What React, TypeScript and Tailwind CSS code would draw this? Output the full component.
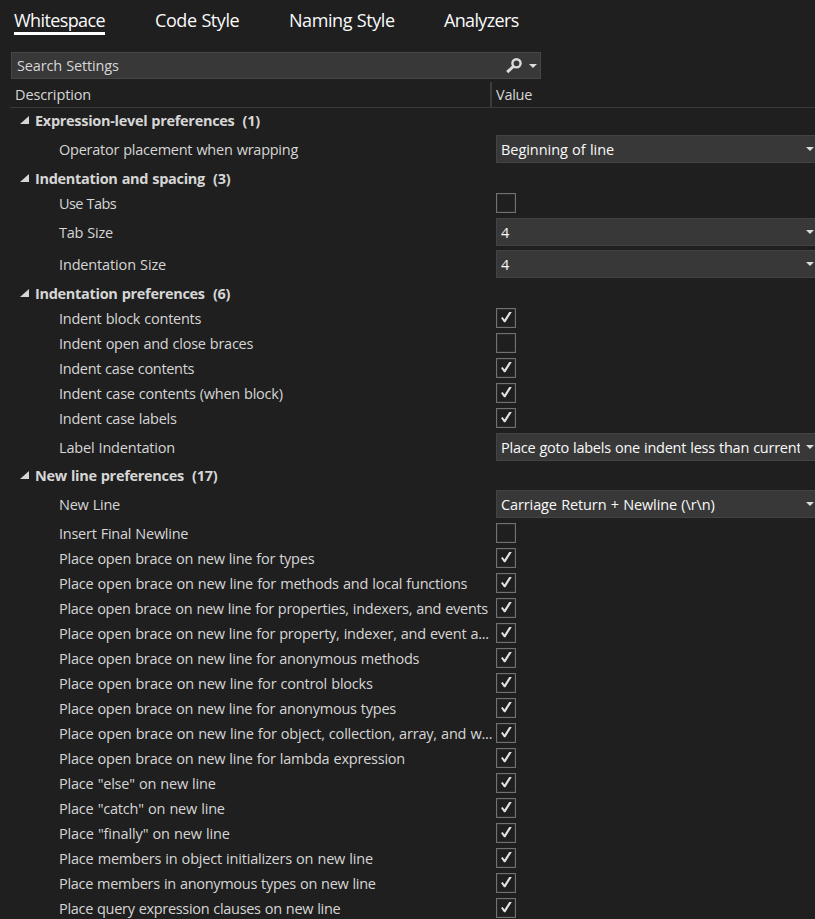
import clsx from "clsx";

type Group = { kind: "group"; label: string; count: number; height: string };
type Check = { kind: "check"; label: string; checked: boolean; tracking?: string };
type Select = {
  kind: "select";
  label: string;
  value: string;
  height: string;
  tracking?: string;
  valueTracking?: string;
};
type Row = Group | Check | Select;

const check = (label: string, checked = true, tracking?: string): Check => ({
  kind: "check",
  label,
  checked,
  tracking,
});

const rows: Row[] = [
  { kind: "group", label: "Expression-level preferences", count: 1, height: "h-[25px] pt-[3px]" },
  {
    kind: "select",
    label: "Operator placement when wrapping",
    value: "Beginning of line",
    height: "h-8",
    valueTracking: "tracking-[-0.05px]",
  },
  { kind: "group", label: "Indentation and spacing", count: 3, height: "h-[26px] pt-1" },
  check("Use Tabs", false, "tracking-[-0.6px]"),
  { kind: "select", label: "Tab Size", value: "4", height: "h-8" },
  { kind: "select", label: "Indentation Size", value: "4", height: "h-8", tracking: "tracking-[-0.15px]" },
  { kind: "group", label: "Indentation preferences", count: 6, height: "h-[26px] pt-1" },
  check("Indent block contents"),
  check("Indent open and close braces", false),
  check("Indent case contents", true, "tracking-[-0.33px]"),
  check("Indent case contents (when block)"),
  check("Indent case labels"),
  {
    kind: "select",
    label: "Label Indentation",
    value: "Place goto labels one indent less than current",
    height: "h-8",
    tracking: "tracking-[-0.19px]",
  },
  { kind: "group", label: "New line preferences", count: 17, height: "h-[25px] pt-[3px]" },
  {
    kind: "select",
    label: "New Line",
    value: "Carriage Return + Newline (\\r\\n)",
    height: "h-[33px]",
    valueTracking: "tracking-[-0.11px]",
  },
  check("Insert Final Newline", false),
  check("Place open brace on new line for types"),
  check("Place open brace on new line for methods and local functions", true, "tracking-[-0.22px]"),
  check("Place open brace on new line for properties, indexers, and events", true, "tracking-[-0.29px]"),
  check("Place open brace on new line for property, indexer, and event a..."),
  check("Place open brace on new line for anonymous methods"),
  check("Place open brace on new line for control blocks", true, "tracking-[-0.21px]"),
  check("Place open brace on new line for anonymous types"),
  check("Place open brace on new line for object, collection, array, and w...", true, "tracking-[-0.2px]"),
  check("Place open brace on new line for lambda expression", true, "tracking-[-0.23px]"),
  check('Place "else" on new line', true, "tracking-[-0.21px]"),
  check('Place "catch" on new line', true, "tracking-[-0.2px]"),
  check('Place "finally" on new line', true, "tracking-[-0.15px]"),
  check("Place members in object initializers on new line", true, "tracking-[-0.2px]"),
  check("Place members in anonymous types on new line", true, "tracking-[-0.3px]"),
  check("Place query expression clauses on new line", true, "tracking-[-0.31px]"),
];

function Caret() {
  return (
    <svg className="h-1 w-2 shrink-0" viewBox="0 0 8 4">
      <path d="M0 0H8L4 4Z" fill="#dcdcdc" />
    </svg>
  );
}

function CheckBox({ checked }: { checked: boolean }) {
  return (
    <div className="size-5 border border-[#717171] bg-[#1f1f1f]">
      <div className="size-full border border-[#2b2b2b]">
        {checked && (
          <svg className="size-4" viewBox="0 0 16 16">
            <path d="M3 7.9L4.6 6.9L6.5 9.4L11.2 2H13.8L7.4 12.2H6Z" fill="#e2e2e2" />
          </svg>
        )}
      </div>
    </div>
  );
}

function SettingRow({ row }: { row: Row }) {
  if (row.kind === "group") {
    return (
      <div className={clsx("flex shrink-0 items-start pl-5", row.height)}>
        <svg className="mt-[5px] h-2 w-[9px]" viewBox="0 0 9 8">
          <path d="M9 0V8H0Z" fill="#d6d6d6" />
        </svg>
        <span className="ml-1.5 text-[14.5px] leading-5 font-bold tracking-[-0.3px] whitespace-pre">
          {row.label}{"  "}({row.count})
        </span>
      </div>
    );
  }
  return (
    <div className={clsx("flex shrink-0 items-start pt-0.5", row.kind === "select" ? row.height : "h-[25px]")}>
      <span
        className={clsx(
          "w-[496px] shrink-0 pl-[59px] leading-5 whitespace-nowrap",
          row.kind === "select" ? "pt-[5px]" : "pt-px",
          row.tracking,
        )}
      >
        {row.label}
      </span>
      {row.kind === "select" ? (
        <div className="flex h-7 min-w-0 flex-1 items-center border border-r-0 border-[#434343] bg-[#383838] pr-px pl-1 text-[#fafafa]">
          <span
            className={clsx(
              "min-w-0 flex-1 overflow-hidden pt-0.5 leading-5 whitespace-nowrap",
              row.valueTracking,
            )}
          >
            {row.value}
          </span>
          <span className="flex pl-1.5">
            <Caret />
          </span>
        </div>
      ) : (
        <CheckBox checked={row.checked} />
      )}
    </div>
  );
}

export default function App() {
  return (
    <div className="flex h-[919px] w-[815px] flex-col overflow-hidden bg-[#1f1f1f] font-['Open_Sans','Noto_Sans',sans-serif] text-[14.5px] tracking-[-0.25px] [word-spacing:0.6px] text-[#d6d6d6]">
      <nav className="flex h-[52px] shrink-0 items-start gap-[50px] pt-2 pl-3.5 text-[18px] leading-6 tracking-[-0.43px] text-[#fafafa]">
        <span className="h-[27px] w-[91px] border-b-[3px] border-white tracking-[-0.6px] whitespace-nowrap">
          Whitespace
        </span>
        <span className="w-[84px] whitespace-nowrap">Code Style</span>
        <span className="w-[105px] whitespace-nowrap">Naming Style</span>
        <span className="tracking-[-0.65px] whitespace-nowrap">Analyzers</span>
      </nav>

      <div className="ml-[11px] flex h-[27px] w-[530px] shrink-0 items-center border border-[#464646] bg-[#383838] pr-[3px] pl-[5px]">
        <span className="flex-1 leading-5 tracking-[-0.15px]">Search Settings</span>
        <svg className="mr-[7px] size-4" viewBox="0 0 16 16" fill="none" stroke="#dcdcdc">
          <circle cx="10.5" cy="5.3" r="4.1" strokeWidth="2.4" />
          <path d="M7.4 8.4L1.2 14.2" strokeWidth="3" />
        </svg>
        <Caret />
      </div>

      <div className="ml-2.5 flex h-[29px] shrink-0 border-b border-[#3a3a3a] pt-[3px]">
        <span className="w-[480px] pt-[3px] pl-[5px] leading-5 tracking-[-0.12px]">Description</span>
        <span className="border-l-2 border-[#3d3d3d] pt-[3px] pl-1 leading-5">Value</span>
      </div>

      <div className="flex flex-col">
        {rows.map((row) => (
          <SettingRow key={row.label} row={row} />
        ))}
      </div>
    </div>
  );
}
